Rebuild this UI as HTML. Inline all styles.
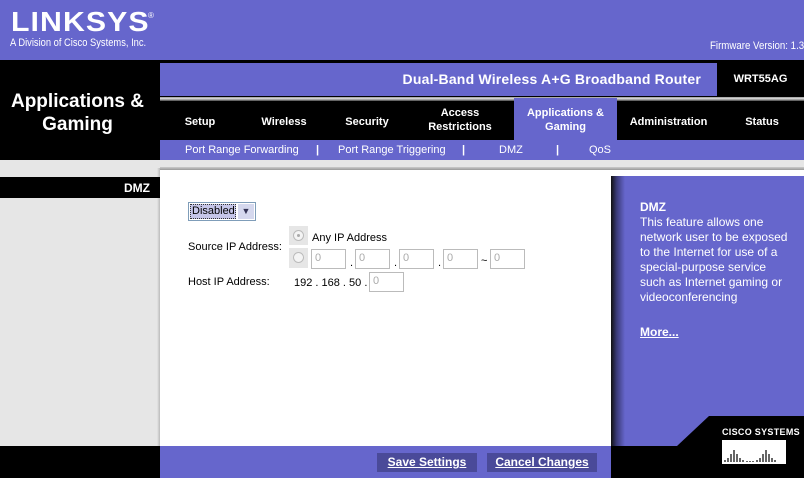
<!DOCTYPE html>
<html><head><style>
*{margin:0;padding:0;box-sizing:border-box}
body{width:804px;height:478px;position:relative;overflow:hidden;background:#fff;font-family:"Liberation Sans",Arial,sans-serif;color:#000}
.a{position:absolute}
.w{color:#fff}
.b{font-weight:bold}
.tab{position:absolute;top:102px;height:40px;color:#fff;font-weight:bold;font-size:11px;text-align:center;display:flex;align-items:center;justify-content:center;line-height:14px}
.sub{position:absolute;top:144px;font-size:11px;color:#fff}
.inp{position:absolute;height:20px;border:1px solid #bbb;background:#fff;font-size:11px;color:#aaa;padding:2px 3px}
.lbl{position:absolute;font-size:11px}
</style></head><body>
<div class="a" style="left:0;top:0;width:804px;height:60px;background:#6666cc"></div>
<div class="a w b" style="left:11px;top:6px;font-size:28px;letter-spacing:1px;transform:scaleX(1.08);transform-origin:left">LINKSYS</div>
<div class="a w" style="left:148px;top:11px;font-size:8px">®</div>
<div class="a w" style="left:10px;top:37px;font-size:11px;transform:scaleX(0.85);transform-origin:left">A Division of Cisco Systems, Inc.</div>
<div class="a w" style="left:710px;top:40px;font-size:11px;white-space:nowrap;transform:scaleX(0.88);transform-origin:left">Firmware Version: 1.30</div>
<div class="a" style="left:0;top:60px;width:804px;height:100px;background:#000"></div>
<div class="a w b" style="left:0;top:90px;width:155px;text-align:center;font-size:19px;line-height:23px">Applications &amp;<br>Gaming</div>
<div class="a" style="left:160px;top:63px;width:557px;height:33px;background:#6666cc"></div>
<div class="a w b" style="left:160px;top:71px;width:541px;text-align:right;font-size:14px;letter-spacing:0.2px">Dual-Band Wireless A+G Broadband Router</div>
<div class="a w b" style="left:717px;top:73px;width:87px;text-align:center;font-size:11px">WRT55AG</div>
<div class="a" style="left:160px;top:97px;width:644px;height:4px;background:linear-gradient(#999,#ddd 40%,#444)"></div>
<div class="a" style="left:514px;top:98px;width:103px;height:42px;background:#6666cc"></div>
<div class="tab" style="left:160px;width:80px">Setup</div>
<div class="tab" style="left:240px;width:88px">Wireless</div>
<div class="tab" style="left:328px;width:78px">Security</div>
<div class="tab" style="left:406px;width:108px;top:100px">Access<br>Restrictions</div>
<div class="tab" style="left:514px;width:103px;top:100px">Applications &amp;<br>Gaming</div>
<div class="tab" style="left:617px;width:103px">Administration</div>
<div class="tab" style="left:720px;width:84px">Status</div>
<div class="a" style="left:160px;top:140px;width:644px;height:20px;background:#6666cc"></div>
<div class="sub" style="left:185px">Port Range Forwarding</div>
<div class="sub b" style="left:316px">|</div>
<div class="sub" style="left:338px">Port Range Triggering</div>
<div class="sub b" style="left:462px">|</div>
<div class="sub" style="left:499px">DMZ</div>
<div class="sub b" style="left:556px">|</div>
<div class="sub" style="left:589px">QoS</div>
<div class="a" style="left:0;top:160px;width:804px;height:8px;background:#e6e6e6"></div>
<div class="a" style="left:160px;top:167px;width:644px;height:3px;background:linear-gradient(#ccc,#999)"></div>
<div class="a" style="left:0;top:168px;width:160px;height:278px;background:#e6e6e6"></div>
<div class="a" style="left:157px;top:168px;width:3px;height:278px;background:linear-gradient(90deg,#e6e6e6,#bbb)"></div>
<div class="a" style="left:0;top:177px;width:160px;height:21px;background:#000"></div>
<div class="a w b" style="left:0;top:181px;width:150px;text-align:right;font-size:12px">DMZ</div>
<div class="a" style="left:188px;top:202px;width:68px;height:19px;border:1px solid #7f9db9;background:#fff"></div>
<div class="a" style="left:190px;top:204px;width:46px;height:15px;background:#c5c5e8;border:1px dotted #333;font-size:11px;padding-left:1px;line-height:13px">Disabled</div>
<div class="a" style="left:238px;top:204px;width:16px;height:15px;background:#d5d8ee;font-size:9px;text-align:center;line-height:15px;color:#335">&#9660;</div>
<div class="lbl" style="left:188px;top:241px">Source IP Address:</div>
<div class="a" style="left:289px;top:226px;width:19px;height:19px;background:#e6e6e6"></div>
<div class="a" style="left:293px;top:230px;width:11px;height:11px;border-radius:50%;border:1px solid #bbb;background:#f4f4f4"></div>
<div class="a" style="left:297px;top:234px;width:3px;height:3px;border-radius:50%;background:#aaa"></div>
<div class="lbl" style="left:312px;top:232px">Any IP Address</div>
<div class="a" style="left:289px;top:248px;width:19px;height:20px;background:#e6e6e6"></div>
<div class="a" style="left:293px;top:252px;width:11px;height:11px;border-radius:50%;border:1px solid #bbb;background:#f4f4f4"></div>
<div class="inp" style="left:311px;top:249px;width:35px">0</div>
<div class="lbl" style="left:350px;top:257px">.</div>
<div class="inp" style="left:355px;top:249px;width:35px">0</div>
<div class="lbl" style="left:394px;top:257px">.</div>
<div class="inp" style="left:399px;top:249px;width:35px">0</div>
<div class="lbl" style="left:438px;top:257px">.</div>
<div class="inp" style="left:443px;top:249px;width:35px">0</div>
<div class="lbl" style="left:481px;top:255px">~</div>
<div class="inp" style="left:490px;top:249px;width:35px">0</div>
<div class="lbl" style="left:188px;top:276px">Host IP Address:</div>
<div class="lbl" style="left:294px;top:277px">192 . 168 . 50 .</div>
<div class="inp" style="left:369px;top:272px;width:35px">0</div>
<div class="a" style="left:611px;top:170px;width:193px;height:7px;background:#fff"></div>
<div class="a" style="left:611px;top:176px;width:193px;height:270px;background:#6666cc"></div>
<div class="a" style="left:611px;top:176px;width:14px;height:270px;background:linear-gradient(90deg,#111,#3a3a77 40%,#6666cc)"></div>
<div class="a w" style="left:640px;top:200px;font-size:12px;line-height:15px;width:154px"><b>DMZ</b><br>This feature allows one network user to be exposed to the Internet for use of a special-purpose service such as Internet gaming or videoconferencing</div>
<div class="a w b" style="left:640px;top:325px;font-size:12px;text-decoration:underline">More...</div>
<svg class="a" style="left:611px;top:410px" width="193" height="68"><polygon points="0,36 66,36 98,6 193,6 193,68 0,68" fill="#000"/></svg>
<div class="a w b" style="left:722px;top:427px;font-size:9px;letter-spacing:0.3px">CISCO SYSTEMS</div>
<svg class="a" style="left:722px;top:440px" width="64" height="24"><rect width="64" height="24" fill="#fff"/><g stroke="#000" stroke-width="1.2"><path d="M3 22v-2M6 22v-4M9 22v-8M12 22v-12M15 22v-8M18 22v-4M21 22v-2M25 22v-1M28 22v-1M31 22v-1M35 22v-2M38 22v-4M41 22v-8M44 22v-12M47 22v-8M50 22v-4M53 22v-2"/></g></svg>
<div class="a" style="left:0;top:446px;width:160px;height:32px;background:#000"></div>
<div class="a" style="left:160px;top:446px;width:451px;height:32px;background:#6666cc"></div>
<div class="a w b" style="left:377px;top:453px;width:100px;height:19px;background:#4a4a99;font-size:12px;text-align:center;line-height:19px;text-decoration:underline">Save Settings</div>
<div class="a w b" style="left:487px;top:453px;width:110px;height:19px;background:#4a4a99;font-size:12px;text-align:center;line-height:19px;text-decoration:underline">Cancel Changes</div>
</body></html>
